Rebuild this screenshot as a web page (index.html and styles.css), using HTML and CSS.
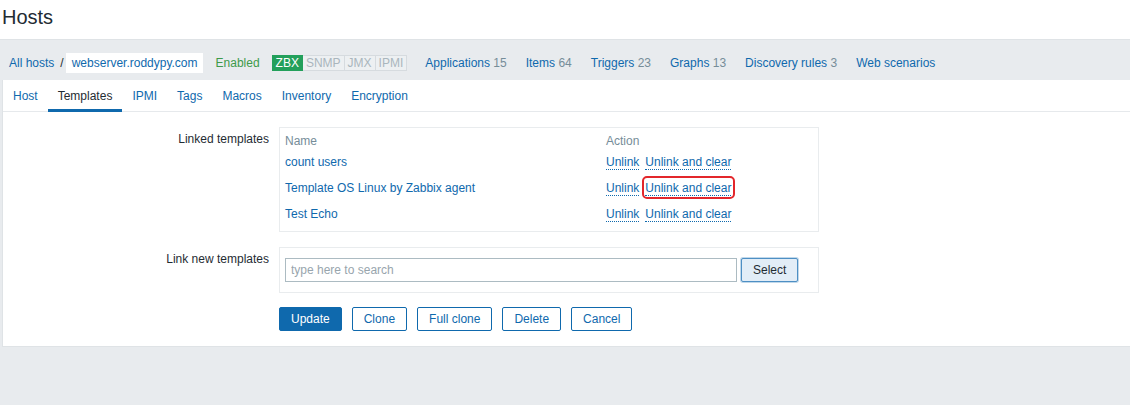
FILE: index.html
```html
<!DOCTYPE html>
<html lang="en">
<head>
<meta charset="utf-8">
<title>Hosts</title>
<link rel="stylesheet" href="styles.css">
</head>
<body>
<header class="page-header"><h1>Hosts</h1></header>
<nav class="host-nav">
  <a class="crumb" href="#">All hosts</a>
  <span class="sep">/</span>
  <a class="crumb current" href="#">webserver.roddypy.com</a>
  <span class="status-enabled">Enabled</span>
  <div class="badges"><span class="badge on">ZBX</span><span class="badge">SNMP</span><span class="badge">JMX</span><span class="badge">IPMI</span></div>
  <ul class="nav-links">
    <li><a href="#">Applications</a> <span class="count">15</span></li>
    <li><a href="#">Items</a> <span class="count">64</span></li>
    <li><a href="#">Triggers</a> <span class="count">23</span></li>
    <li><a href="#">Graphs</a> <span class="count">13</span></li>
    <li><a href="#">Discovery rules</a> <span class="count">3</span></li>
    <li><a href="#">Web scenarios</a></li>
  </ul>
</nav>
<main class="container">
  <ul class="tabs">
    <li><a href="#">Host</a></li>
    <li class="active"><a href="#">Templates</a></li>
    <li><a href="#">IPMI</a></li>
    <li><a href="#">Tags</a></li>
    <li><a href="#">Macros</a></li>
    <li><a href="#">Inventory</a></li>
    <li><a href="#">Encryption</a></li>
  </ul>
  <form class="form">
    <div class="label">Linked templates</div>
    <div class="box linked">
      <table class="tpl-table">
        <thead>
          <tr><th class="col-name">Name</th><th>Action</th></tr>
        </thead>
        <tbody>
          <tr><td><a href="#">count users</a></td><td><a class="unlink" href="#">Unlink</a><a class="unlink gap" href="#">Unlink and clear</a></td></tr>
          <tr><td><a href="#">Template OS Linux by Zabbix agent</a></td><td><a class="unlink" href="#">Unlink</a><a class="unlink gap hl" href="#">Unlink and clear</a></td></tr>
          <tr><td><a href="#">Test Echo</a></td><td><a class="unlink" href="#">Unlink</a><a class="unlink gap" href="#">Unlink and clear</a></td></tr>
        </tbody>
      </table>
    </div>
    <div class="label">Link new templates</div>
    <div class="box search">
      <input type="text" placeholder="type here to search">
      <button type="button" class="btn-select">Select</button>
    </div>
    <div class="actions">
      <button type="button" class="btn primary">Update</button>
      <button type="button" class="btn">Clone</button>
      <button type="button" class="btn">Full clone</button>
      <button type="button" class="btn">Delete</button>
      <button type="button" class="btn">Cancel</button>
    </div>
  </form>
</main>
</body>
</html>
```
FILE: styles.css
```css
html, body {
  margin: 0;
  background: #e8ebee;
}
body {
  font-family: "Liberation Sans", Arial, sans-serif;
  font-size: 12px;
  color: #1f2c33;
}
a {
  color: #0f69ad;
  text-decoration: none;
}

.page-header {
  background: #fff;
  height: 40px;
  box-sizing: border-box;
  padding: 5px 0 0 2px;
  border-bottom: 1px solid #dfe3e6;
}
.page-header h1 {
  margin: 0;
  font-size: 20px;
  font-weight: normal;
  line-height: 24px;
  color: #1f2c33;
}

.host-nav {
  display: flex;
  align-items: center;
  height: 40px;
  box-sizing: border-box;
  padding: 5px 0 0 9px;
  line-height: 14px;
}
.sep {
  margin: 0 2px 0 6px;
}
.current {
  background: #fff;
  line-height: 20px;
  padding: 0 5px 0 6px;
}
.status-enabled {
  margin-left: 13px;
  color: #3d9a4a;
}
.badges {
  display: flex;
  margin-left: 12px;
}
.badge {
  border: 1px solid #d6dbdf;
  background: #edf0f2;
  color: #aab6bd;
  padding: 0 3px;
  line-height: 14px;
}
.badge + .badge {
  margin-left: -1px;
}
.badge.on {
  background: #23a05b;
  border-color: #23a05b;
  color: #fff;
  position: relative;
}
.nav-links {
  display: flex;
  gap: 19px;
  margin: 0 0 0 18px;
  padding: 0;
  list-style: none;
}
.count {
  color: #768d99;
}

.container {
  margin-left: 2px;
  background: #fff;
  border-left: 1px solid #dfe3e6;
  border-bottom: 1px solid #dfe3e6;
}

.tabs {
  display: flex;
  list-style: none;
  margin: 0;
  padding: 0;
  border-bottom: 1px solid #e6e9ec;
}
.tabs li {
  padding: 9px 10px 6px;
  line-height: 14px;
  border-bottom: 3px solid transparent;
  margin-bottom: -1px;
}
.tabs li.active {
  border-bottom-color: #0f69ad;
}
.tabs li.active a {
  color: #1f2c33;
}

.form {
  display: grid;
  grid-template-columns: 266px auto;
  column-gap: 10px;
  row-gap: 15px;
  justify-content: start;
  padding: 15px 0 15px;
}
.label {
  text-align: right;
  padding-top: 5px;
  line-height: 14px;
}
.box {
  border: 1px solid #e9ecee;
  width: 540px;
  box-sizing: border-box;
}

.linked {
  padding: 5px 5px 4px;
}
.tpl-table {
  border-collapse: collapse;
}
.tpl-table th {
  text-align: left;
  font-weight: normal;
  color: #768d99;
  line-height: 16px;
  padding: 0;
}
.tpl-table th.col-name {
  width: 321px;
}
.tpl-table td {
  line-height: 26px;
  padding: 0;
}
.unlink {
  border-bottom: 1px dotted #0f69ad;
}
.unlink.gap {
  margin-left: 6px;
}
.hl {
  position: relative;
}
.hl::after {
  content: "";
  position: absolute;
  left: -3px;
  right: -4px;
  top: -5px;
  bottom: -4px;
  border: 2px solid #e3262b;
  border-radius: 5px;
}

.search {
  display: flex;
  align-items: center;
  padding: 10px 5px;
}
.search input {
  width: 452px;
  height: 24px;
  box-sizing: border-box;
  border: 1px solid #acbbc2;
  border-radius: 0;
  padding: 0 5px;
  margin: 0;
  font: inherit;
  color: #1f2c33;
  outline: none;
}
.search input::placeholder {
  color: #98a5ad;
}
.btn-select {
  margin-left: 4px;
  height: 24px;
  padding: 0 11px;
  font: inherit;
  color: #1f2c33;
  background: #e2edf7;
  border: 1px solid #4d8fc4;
  border-radius: 2px;
  box-shadow: 0 0 0 1px rgba(77, 143, 196, 0.35);
}

.actions {
  grid-column: 2;
  display: flex;
  gap: 10px;
  margin-top: -1px;
}
.btn {
  height: 24px;
  padding: 0 11px;
  font: inherit;
  color: #0f69ad;
  background: #fff;
  border: 1px solid #0f69ad;
  border-radius: 2px;
}
.btn.primary {
  background: #0f69ad;
  color: #fff;
}
```
